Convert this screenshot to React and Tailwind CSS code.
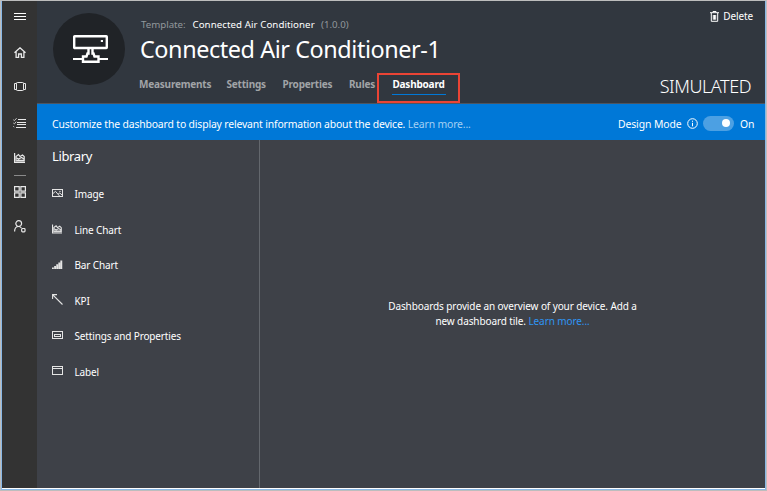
import React from "react";

function Svg({ className, children, ...rest }) {
  return (
    <svg className={`block shrink-0 ${className}`} fill="none" stroke="currentColor" {...rest}>
      {children}
    </svg>
  );
}

const chartShape = (
  <>
    <path d="M.6 0V9.4H11" />
    <path d="M2 8V3.5L4.5 1.5 6 3.5 8.5 2 10.2 3.5V8Z" />
    <path d="M2.3 4.7 4.5 6 7.5 4.5 10 6M2.5 7.3H10" />
  </>
);

const HomeIcon = () => (
  <Svg className="h-[11px] w-[12px]" viewBox="0 0 12 11" strokeWidth="1.3">
    <path d="M.5 5.8 6 .8 11.5 5.8M2.1 4.8V10.4H4.6V7H7.4V10.4H9.9V4.8" />
  </Svg>
);
const DevicesIcon = () => (
  <Svg className="h-[9px] w-[12px]" viewBox="0 0 12 9" strokeWidth="1">
    <rect x="2.5" y=".5" width="7" height="8" rx=".8" />
    <path d="M2.5 1.5H.5V7.5H2.5M9.5 1.5H11.5V7.5H9.5" />
  </Svg>
);
const ListIcon = () => (
  <Svg className="h-[10px] w-[13px]" viewBox="0 0 13 10" strokeWidth="1">
    <path d="M5 1.5H13M4 4.5H13M4 6.5H13M3 9.5H13" />
    <path d="M.3 1.7 1.4 2.6 3.6.2M.3 5 1.4 5.9 3.2 3.7M.3 8.2 1.2 9.2" strokeWidth=".8" />
  </Svg>
);
const GridIcon = () => (
  <Svg className="h-[12px] w-[12px]" viewBox="0 0 12 12" strokeWidth="1.2">
    <path d="M.6.6H5.2V5.2H.6ZM6.9.6H11.4V5.2H6.9ZM.6 6.9H5.2V11.4H.6ZM6.9 6.9H11.4V11.4H6.9Z" />
  </Svg>
);
const UserIcon = () => (
  <Svg className="h-[13px] w-[12px]" viewBox="0 0 12 13" strokeWidth="1.2">
    <circle cx="4.7" cy="3.6" r="2.9" />
    <path d="M.6 11.5C.6 8.5 2.2 6.5 4.6 6.5 5.8 6.5 6.8 7.2 7.4 8" />
    <rect x="7.7" y="8.5" width="3.3" height="3.3" rx=".8" />
  </Svg>
);

const DeviceIcon = () => (
  <Svg className="ml-[3px] h-[28px] w-[35px]" viewBox="0 0 35 28" strokeWidth="2.4">
    <rect x="1.2" y="1.2" width="32.6" height="11.8" rx=".5" />
    <path d="M27.8 6H30" strokeWidth="2" />
    <path d="M0 24H10M25 24H35" strokeWidth="2" />
    <path d="M15.5 14V18.5H14.5L13.5 21.5H10V26.8H25.5V21.5H21.5L20.5 18.5H19.5V14" />
  </Svg>
);

const LIBRARY = [
  {
    label: "Image",
    icon: (
      <Svg className="h-[8px] w-[11px]" viewBox="0 0 11 8">
        <rect x=".5" y=".5" width="10" height="7" />
        <path d="M1 4.5 3.5 2.3 7.5 7M6 5.2 7.8 4 10 6M7.3 2.4H8.7" />
      </Svg>
    ),
  },
  { label: "Line Chart", icon: <Svg className="h-[10px] w-[10px]" viewBox="0 0 11 10" strokeWidth="1.2">{chartShape}</Svg> },
  {
    label: "Bar Chart",
    icon: (
      <Svg className="h-[9px] w-[11px]" viewBox="0 0 11 9" strokeWidth="1.9">
        <path d="M.9 9V7.5M3.1 9V6M5.2 9V4.3M7.3 9V2.5M9.3 9V.5" />
      </Svg>
    ),
  },
  {
    label: "KPI",
    icon: (
      <Svg className="h-[11px] w-[11px]" viewBox="0 0 11 11" strokeWidth="1.1"><path d="M.6 5V.6H5M.8.8 10.5 10.5" /></Svg>
    ),
  },
  {
    label: "Settings and Properties",
    icon: (
      <Svg className="h-[8px] w-[11px]" viewBox="0 0 11 8">
        <rect x=".5" y=".5" width="10" height="7" /><rect x="2.5" y="3.5" width="6" height="2" />
      </Svg>
    ),
  },
  {
    label: "Label",
    icon: (
      <Svg className="h-[9px] w-[11px]" viewBox="0 0 11 9">
        <rect x=".5" y=".5" width="10" height="8" /><path d="M1 2.5H10" />
      </Svg>
    ),
  },
];

function Sidebar() {
  return (
    <nav className="flex w-[35px] shrink-0 flex-col items-center bg-[#333333] text-[#e8e8e8]">
      <div className="mt-[12px] flex h-[7px] w-[12px] flex-col justify-between">
        <i className="h-px bg-white" /><i className="h-px bg-white" /><i className="h-px bg-white" />
      </div>
      <div className="mt-[27px]"><HomeIcon /></div>
      <div className="mt-[24px]"><DevicesIcon /></div>
      <div className="mt-[27px]"><ListIcon /></div>
      <div className="mt-[25px]">
        <Svg className="h-[10px] w-[11px]" viewBox="0 0 11 10" strokeWidth="1.2">{chartShape}</Svg>
      </div>
      <div className="mt-[12px] h-px w-[12px] bg-[#8a8a8a]" />
      <div className="mt-[10px]"><GridIcon /></div>
      <div className="mt-[22px]"><UserIcon /></div>
    </nav>
  );
}

function Header() {
  return (
    <header className="flex h-[103px] shrink-0 border-b border-[#4d5560] bg-[#31373f]">
      <div className="mt-[12px] ml-[16px] flex h-[72px] w-[72px] shrink-0 items-center justify-center rounded-full bg-[#202327] text-white">
        <DeviceIcon />
      </div>
      <div className="flex w-[340px] shrink-0 flex-col pl-[14px] whitespace-nowrap">
        <div className="mt-[17px] flex h-[14px] items-center pl-[2px] text-[9.7px] leading-[14px] text-[#92979c]">
          <span className="w-[51.5px]">Template:</span>
          <span className="w-[128.5px] tracking-[0.07px] text-white">Connected Air Conditioner</span>
          <span>(1.0.0)</span>
        </div>
        <h1 className="h-[34px] pl-px text-[23.4px] leading-[34px] tracking-[-0.42px] text-white">Connected Air Conditioner-1</h1>
        <div className="mt-[7px] flex text-[10px] font-bold tracking-[-0.2px] text-[#a1a4a7]">
          <span className="mt-[4px] w-[87.5px] leading-[14px]">Measurements</span>
          <span className="mt-[4px] w-[56px] leading-[14px]">Settings</span>
          <span className="mt-[4px] w-[66.5px] leading-[14px]">Properties</span>
          <span className="mt-[4px] w-[28px] leading-[14px]">Rules</span>
          <div className="flex h-[30px] w-[83px] shrink-0 flex-col items-center border-2 border-[#eb4435] pt-[2px] text-white">
            <span className="leading-[14px]">Dashboard</span>
            <div className="mt-[3px] h-px w-[54px] bg-[#0078d7]" />
          </div>
        </div>
      </div>
      <div className="flex grow flex-col items-end whitespace-nowrap text-white">
        <div className="mt-[9px] mr-[12px] flex h-[13px] items-center gap-[4px] text-[10px] leading-[13px] tracking-[-0.1px]">
          <Svg className="h-[11px] w-[9px]" viewBox="0 0 9 11" strokeWidth="1">
            <path d="M0 1.7H9M3 1.5V.5H6V1.5M1.3 2V10.3H7.7V2M3.3 4V8.7M4.5 4V8.7M5.7 4V8.7" />
          </Svg>
          Delete
        </div>
        <div className="mt-[50px] mr-[14px] h-[26px] text-[18px] leading-[26px] font-light tracking-[-0.45px]">SIMULATED</div>
      </div>
    </header>
  );
}

function Banner() {
  return (
    <div className="flex h-[36px] shrink-0 items-center bg-[#0078d7] pl-[15px] text-[10.4px] whitespace-nowrap text-white">
      <span className="pt-[4px] leading-[14px] tracking-[-0.15px]">
        Customize the dashboard to display relevant information about the device. <a className="text-[#a5d0f3]">Learn more...</a>
      </span>
      <span className="ml-auto w-[69px] pt-[4px] leading-[14px] tracking-[-0.1px]">Design Mode</span>
      <Svg className="mt-[2px] h-[11px] w-[11px]" viewBox="0 0 11 11" strokeWidth="1">
        <circle cx="5.5" cy="5.5" r="4.8" /><path d="M5.5 2.7V3.8M5.5 4.8V8.3" />
      </Svg>
      <div className="mt-[2px] ml-[5px] flex h-[15px] w-[31px] items-center justify-end rounded-full bg-[#4ca0e3] pr-[4px]">
        <div className="h-[8px] w-[8px] rounded-full bg-white" />
      </div>
      <span className="ml-[6px] w-[25px] pt-[4px] leading-[14px]">On</span>
    </div>
  );
}

export default function App() {
  return (
    <div className="h-[491px] w-[767px] overflow-hidden border border-[#bdbdbd] font-['Noto_Sans','Open_Sans',sans-serif]">
      <div className="h-[489px] border-x border-b border-[#8ab8e6] bg-white pb-px">
        <div className="flex h-full">
          <Sidebar />
          <main className="flex grow flex-col bg-[#3e4148]">
            <Header />
            <Banner />
            <div className="flex grow">
              <aside className="flex w-[223px] shrink-0 flex-col border-r border-[#63676d] text-white">
                <h2 className="mt-[6px] ml-[15px] text-[13px] leading-[20px] tracking-[-0.35px]">Library</h2>
                <ul className="mt-[10.6px] text-[10px] tracking-[-0.15px]">
                  {LIBRARY.map((item) => (
                    <li key={item.label} className="flex h-[35.5px] items-center pl-[15px]">
                      <span className="flex w-[22.5px] -translate-y-[1px] text-[#e4e4e4]">{item.icon}</span>
                      <span className="leading-[14px]">{item.label}</span>
                    </li>
                  ))}
                </ul>
              </aside>
              <section className="flex grow justify-center pt-[159px] text-center text-[10px] leading-[15px] tracking-[-0.1px] whitespace-nowrap text-white">
                <p>
                  Dashboards provide an overview of your device. Add a<br />
                  new dashboard tile. <a className="text-[#2e95f3]">Learn more...</a>
                </p>
              </section>
            </div>
          </main>
        </div>
      </div>
    </div>
  );
}
